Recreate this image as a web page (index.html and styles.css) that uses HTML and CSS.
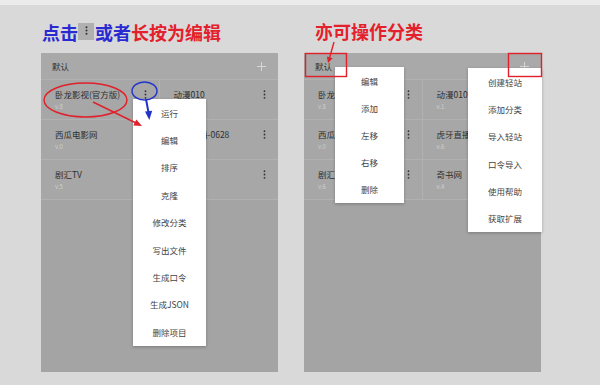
FILE: index.html
```html
<!DOCTYPE html>
<html lang="zh">
<head>
<meta charset="utf-8">
<link rel="stylesheet" href="styles.css">
</head>
<body>
<div class="page">
  <div class="col">
    <div class="title title-left">
      <span class="blue">点击</span>
      <span class="kbd"><svg width="3" height="9" viewBox="0 0 3 9"><circle cx="1.5" cy="1.2" r="1" fill="#333"/><circle cx="1.5" cy="4.5" r="1" fill="#333"/><circle cx="1.5" cy="7.8" r="1" fill="#333"/></svg></span>
      <span class="blue">或者</span><span class="red">长按为编辑</span>
    </div>
    <div class="panel">
      <div class="head"><span>默认</span><svg class="plus" width="9" height="9" viewBox="0 0 9 9"><path d="M4.5 0V9M0 4.5H9" stroke="#d6d6d6" stroke-width="1"/></svg></div>
      <div class="grid">
        <div class="card"><div class="name">卧龙影视(官方版)</div><div class="ver">v.8</div><svg class="dots" width="3" height="9" viewBox="0 0 3 9"><circle cx="1.5" cy="1.2" r="0.9" fill="#333"/><circle cx="1.5" cy="4.5" r="0.9" fill="#333"/><circle cx="1.5" cy="7.8" r="0.9" fill="#333"/></svg></div>
        <div class="card"><div class="name">动漫010</div><div class="ver">v.1</div><svg class="dots" width="3" height="9" viewBox="0 0 3 9"><circle cx="1.5" cy="1.2" r="0.9" fill="#333"/><circle cx="1.5" cy="4.5" r="0.9" fill="#333"/><circle cx="1.5" cy="7.8" r="0.9" fill="#333"/></svg></div>
        <div class="card"><div class="name">西瓜电影网</div><div class="ver">v.0</div><svg class="dots" width="3" height="9" viewBox="0 0 3 9"><circle cx="1.5" cy="1.2" r="0.9" fill="#333"/><circle cx="1.5" cy="4.5" r="0.9" fill="#333"/><circle cx="1.5" cy="7.8" r="0.9" fill="#333"/></svg></div>
        <div class="card"><div class="name">虎牙直播-0628</div><div class="ver">v.6</div><svg class="dots" width="3" height="9" viewBox="0 0 3 9"><circle cx="1.5" cy="1.2" r="0.9" fill="#333"/><circle cx="1.5" cy="4.5" r="0.9" fill="#333"/><circle cx="1.5" cy="7.8" r="0.9" fill="#333"/></svg></div>
        <div class="card"><div class="name">剧汇TV</div><div class="ver">v.5</div><svg class="dots" width="3" height="9" viewBox="0 0 3 9"><circle cx="1.5" cy="1.2" r="0.9" fill="#333"/><circle cx="1.5" cy="4.5" r="0.9" fill="#333"/><circle cx="1.5" cy="7.8" r="0.9" fill="#333"/></svg></div>
        <div class="card"><div class="name">奇书网</div><div class="ver">v.4</div><svg class="dots" width="3" height="9" viewBox="0 0 3 9"><circle cx="1.5" cy="1.2" r="0.9" fill="#333"/><circle cx="1.5" cy="4.5" r="0.9" fill="#333"/><circle cx="1.5" cy="7.8" r="0.9" fill="#333"/></svg></div>
      </div>
      <ul class="menu menu-item">
        <li>运行</li><li>编辑</li><li>排序</li><li>克隆</li><li>修改分类</li><li>写出文件</li><li>生成口令</li><li>生成JSON</li><li>删除项目</li>
      </ul>
    </div>
    <svg class="annot" width="237" height="385" viewBox="0 0 237 385">
      <ellipse cx="44.5" cy="100" rx="41.5" ry="17" fill="none" stroke="#e0202a" stroke-width="1.4"/>
      <ellipse cx="103.5" cy="91" rx="12.5" ry="9" fill="none" stroke="#2233cc" stroke-width="1.4"/>
      <line x1="105" y1="99" x2="107.6" y2="113" stroke="#2233cc" stroke-width="2"/>
      <polygon points="108.3,120 104,111.5 111.2,110.8" fill="#2233cc"/>
      <line x1="52" y1="102" x2="95" y2="123" stroke="#e0202a" stroke-width="1.4"/>
      <polygon points="101,126 92.3,125.6 95.3,119.4" fill="#e0202a"/>
    </svg>
  </div>

  <div class="col">
    <div class="title title-right">
      <span class="red">亦可操作分类</span>
    </div>
    <div class="panel">
      <div class="head"><span>默认</span><svg class="plus" width="9" height="9" viewBox="0 0 9 9"><path d="M4.5 0V9M0 4.5H9" stroke="#d6d6d6" stroke-width="1"/></svg></div>
      <div class="grid">
        <div class="card"><div class="name">卧龙影视(官方版)</div><div class="ver">v.8</div><svg class="dots" width="3" height="9" viewBox="0 0 3 9"><circle cx="1.5" cy="1.2" r="0.9" fill="#333"/><circle cx="1.5" cy="4.5" r="0.9" fill="#333"/><circle cx="1.5" cy="7.8" r="0.9" fill="#333"/></svg></div>
        <div class="card"><div class="name">动漫010</div><div class="ver">v.1</div><svg class="dots" width="3" height="9" viewBox="0 0 3 9"><circle cx="1.5" cy="1.2" r="0.9" fill="#333"/><circle cx="1.5" cy="4.5" r="0.9" fill="#333"/><circle cx="1.5" cy="7.8" r="0.9" fill="#333"/></svg></div>
        <div class="card"><div class="name">西瓜电影网</div><div class="ver">v.0</div><svg class="dots" width="3" height="9" viewBox="0 0 3 9"><circle cx="1.5" cy="1.2" r="0.9" fill="#333"/><circle cx="1.5" cy="4.5" r="0.9" fill="#333"/><circle cx="1.5" cy="7.8" r="0.9" fill="#333"/></svg></div>
        <div class="card"><div class="name">虎牙直播-0628</div><div class="ver">v.6</div><svg class="dots" width="3" height="9" viewBox="0 0 3 9"><circle cx="1.5" cy="1.2" r="0.9" fill="#333"/><circle cx="1.5" cy="4.5" r="0.9" fill="#333"/><circle cx="1.5" cy="7.8" r="0.9" fill="#333"/></svg></div>
        <div class="card"><div class="name">剧汇TV</div><div class="ver">v.6</div><svg class="dots" width="3" height="9" viewBox="0 0 3 9"><circle cx="1.5" cy="1.2" r="0.9" fill="#333"/><circle cx="1.5" cy="4.5" r="0.9" fill="#333"/><circle cx="1.5" cy="7.8" r="0.9" fill="#333"/></svg></div>
        <div class="card"><div class="name">奇书网</div><div class="ver">v.4</div><svg class="dots" width="3" height="9" viewBox="0 0 3 9"><circle cx="1.5" cy="1.2" r="0.9" fill="#333"/><circle cx="1.5" cy="4.5" r="0.9" fill="#333"/><circle cx="1.5" cy="7.8" r="0.9" fill="#333"/></svg></div>
      </div>
      <ul class="menu menu-cat">
        <li>编辑</li><li>添加</li><li>左移</li><li>右移</li><li>删除</li>
      </ul>
      <ul class="menu menu-add">
        <li>创建轻站</li><li>添加分类</li><li>导入轻站</li><li>口令导入</li><li>使用帮助</li><li>获取扩展</li>
      </ul>
    </div>
    <svg class="annot" width="237" height="385" viewBox="0 0 237 385">
      <rect x="1.5" y="53.5" width="41" height="23" fill="none" stroke="#e0202a" stroke-width="1.4"/>
      <rect x="204.5" y="53.5" width="33" height="23" fill="none" stroke="#e0202a" stroke-width="1.4"/>
      <line x1="30" y1="42" x2="25.5" y2="58" stroke="#e0202a" stroke-width="1.4"/>
      <polygon points="24,63 28.7,58.2 22.9,56.4" fill="#e0202a"/>
    </svg>
  </div>
</div>
</body>
</html>
```

FILE: styles.css
```css
html, body {
  margin: 0;
  padding: 0;
}

body {
  width: 600px;
  height: 385px;
  overflow: hidden;
  background: linear-gradient(#ebebeb 0, #ebebeb 5px, #d9d9d9 5px);
  font-family: "Noto Sans CJK SC", "Noto Sans", sans-serif;
}

.page {
  display: flex;
  gap: 26px;
  padding-left: 41px;
}

.col {
  position: relative;
  width: 237px;
}

.title {
  height: 53px;
  box-sizing: border-box;
  padding-top: 22px;
  display: flex;
  align-items: flex-start;
  font-size: 18px;
  font-weight: 700;
  line-height: 20px;
}

.title-left {
  padding-left: 1px;
}

.title-right {
  padding-left: 11px;
  padding-top: 21px;
}

.blue {
  color: #2a2ad2;
}

.red {
  color: #e4202c;
}

.kbd {
  width: 16px;
  height: 17px;
  margin: 1px 1px 0 0;
  background: #b0b0b0;
  display: flex;
  justify-content: center;
  padding-top: 3px;
  box-sizing: border-box;
}

.panel {
  position: relative;
  height: 319px;
  background: #a3a4a3;
}

.head {
  height: 27px;
  box-sizing: border-box;
  display: flex;
  align-items: center;
  justify-content: space-between;
  padding: 0 12px 0 11px;
  font-size: 8.5px;
  color: #333;
  background: #a8a9a8;
  border-bottom: 1px solid #b0b1b0;
}

.grid {
  display: grid;
  grid-template-columns: 1fr 1fr;
  grid-auto-rows: 40px;
}

.card {
  position: relative;
  box-sizing: border-box;
  padding: 9px 0 0 14px;
  background: #a6a7a6;
  border-bottom: 1px solid #b0b1b0;
  overflow: hidden;
}

.card:nth-child(odd) {
  border-right: 1px solid #b0b1b0;
}

.name {
  font-size: 8.5px;
  line-height: 10px;
  color: #2e2e2e;
  white-space: nowrap;
}

.ver {
  font-size: 6px;
  line-height: 8px;
  margin-top: 4px;
  color: #cfcfcf;
}

.dots {
  position: absolute;
  left: 103px;
  top: 10px;
}

.menu {
  position: absolute;
  margin: 0;
  padding: 0;
  list-style: none;
  background: #ffffff;
  box-shadow: 0 1px 3px rgba(0, 0, 0, 0.25);
  z-index: 2;
}

.menu li {
  display: flex;
  align-items: center;
  justify-content: center;
  font-size: 8.5px;
  color: #444;
  white-space: nowrap;
}

.menu-item {
  left: 92px;
  top: 46px;
  width: 73px;
}

.menu-item li {
  height: 27.4px;
}

.menu-cat {
  left: 31px;
  top: 14px;
  width: 69px;
}

.menu-cat li {
  height: 27.2px;
}

.menu-add {
  left: 164px;
  top: 15px;
  width: 74px;
}

.menu-add li {
  height: 27.3px;
}

.annot {
  position: absolute;
  left: 0;
  top: 0;
  overflow: visible;
  pointer-events: none;
  z-index: 3;
}
```
